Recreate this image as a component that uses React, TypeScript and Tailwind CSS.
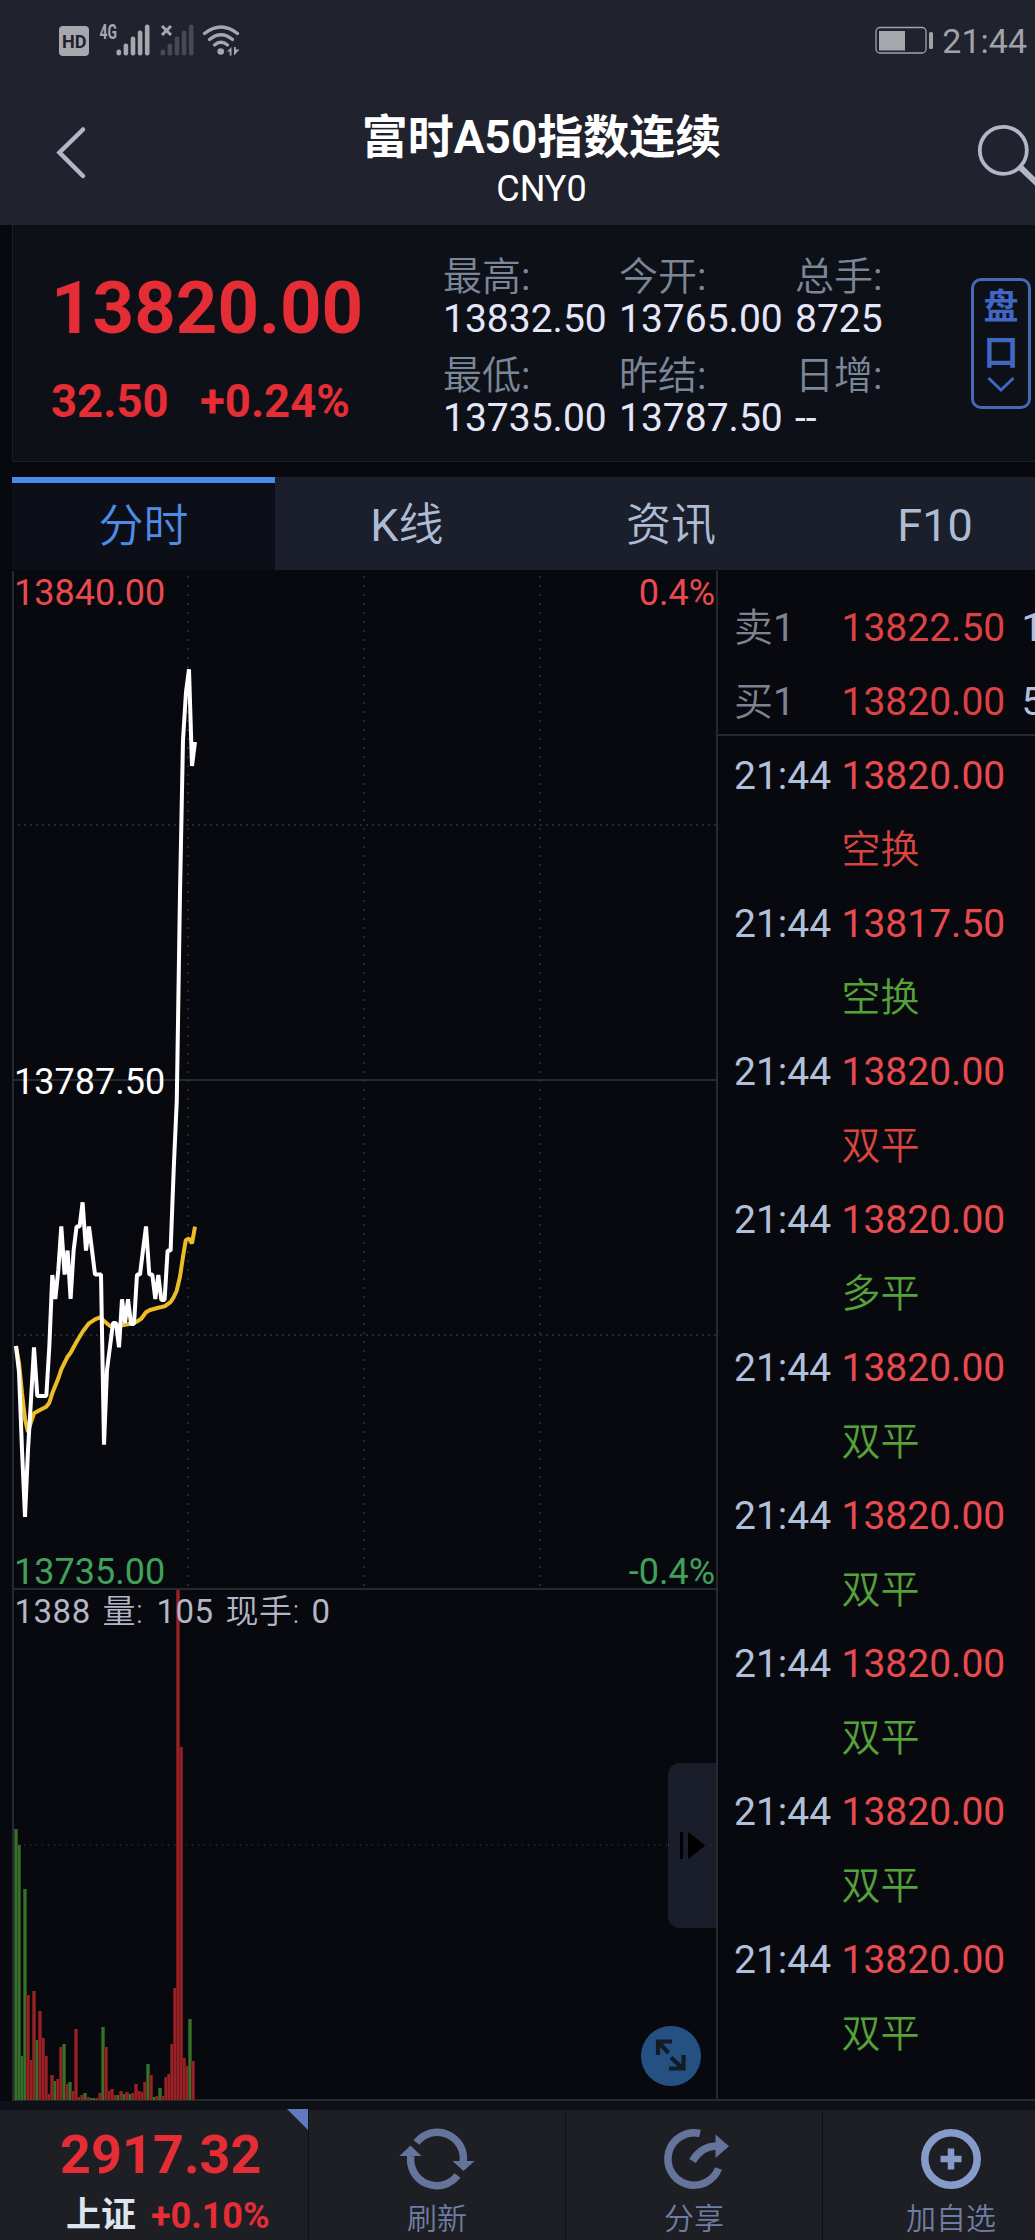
import React from "react";

const FONT = "font-['Roboto','Noto_Sans_CJK_SC',sans-serif]";

type Point = [number, number];

// Price and average lines, in chart-area pixels measured from the page origin.
const PRICE: Point[] = [
  [16, 1346], [19, 1372], [22, 1450], [25, 1517], [28, 1450], [31, 1400], [34, 1347.3],
  [37.3, 1396], [46.3, 1396], [49.3, 1347], [52.3, 1275], [55.3, 1299], [58.3, 1270], [61.3, 1226.5],
  [64.6, 1274.5], [67.6, 1250.6], [70.6, 1299], [73.6, 1250.6], [76.6, 1226.5], [79.6, 1226.5],
  [82.6, 1202.3], [86, 1250.6], [89, 1226.5], [92, 1250], [95, 1274.5], [101, 1274.5], [104, 1444.6],
  [107, 1370], [110, 1346.5], [113, 1323], [116, 1323], [119, 1347.3], [122, 1299.3], [125, 1323],
  [128, 1299.3], [131, 1324], [134, 1324], [137, 1274.5], [140, 1274.5], [143, 1250], [146, 1226.5],
  [149.3, 1274.5], [152.3, 1274.5], [155.3, 1299], [158.3, 1275], [161.3, 1300], [164.6, 1300],
  [167.6, 1250.6], [170.6, 1250.6], [173.8, 1167], [176.8, 1100], [180, 893], [183, 740], [186, 692],
  [189, 669.3], [192, 766], [195, 742],
];

const AVERAGE: Point[] = [
  [16, 1346], [19, 1363], [22, 1393], [25, 1419], [28, 1432], [31, 1422], [34, 1413.3], [40, 1410],
  [46.3, 1406.7], [49.3, 1402.7], [52.3, 1393.3], [58.3, 1378.3], [61.3, 1369.3], [67.6, 1356.7],
  [70.6, 1352.7], [76.6, 1341.7], [82.6, 1331.7], [89, 1323.3], [95, 1319.3], [100, 1317.3],
  [104, 1321], [110, 1326], [115, 1326], [122, 1325.3], [128, 1324.3], [134, 1322.7], [137, 1321.7],
  [141.6, 1318.3], [146, 1312.3], [150, 1310], [158.3, 1307.7], [164.6, 1306.3], [170.6, 1302],
  [173.6, 1297.3], [176.6, 1291], [180, 1276.7], [183, 1256.7], [185.8, 1240], [189, 1238.7],
  [192, 1243.3], [195, 1226.7],
];

// Height of each minute's volume bar and whether the price rose (r) or fell (g).
const VOLUME: [number, "r" | "g"][] = [
  [271, "g"], [255, "g"], [44, "g"], [211, "g"], [105, "r"], [40, "r"], [109, "r"], [60, "g"],
  [89, "r"], [62, "r"], [44, "r"], [6, "r"], [25, "r"], [19, "g"], [21, "r"], [53, "r"], [56, "g"],
  [16, "r"], [18, "g"], [9, "r"], [71, "r"], [3, "r"], [5, "r"], [7, "g"], [3, "r"], [2, "g"],
  [2, "g"], [2, "r"], [7, "r"], [73, "g"], [53, "r"], [9, "r"], [11, "r"], [5, "r"], [5, "g"],
  [9, "r"], [6, "g"], [8, "r"], [6, "g"], [7, "r"], [16, "r"], [9, "r"], [8, "r"], [18, "r"],
  [36, "g"], [25, "r"], [3, "g"], [4, "r"], [12, "g"], [4, "r"], [23, "r"], [26, "r"], [56, "r"],
  [112, "r"], [510, "r"], [353, "r"], [42, "r"], [34, "r"], [81, "g"], [39, "r"],
];

const TRADES = [
  ["13820.00", "空换", true],
  ["13817.50", "空换", false],
  ["13820.00", "双平", true],
  ["13820.00", "多平", false],
  ["13820.00", "双平", false],
  ["13820.00", "双平", false],
  ["13820.00", "双平", false],
  ["13820.00", "双平", false],
  ["13820.00", "双平", false],
] as const;

const ORDERS = [
  ["卖", "13822.50", "1"],
  ["买", "13820.00", "5"],
];

const toPoints = (p: Point[]) => p.map(([x, y]) => `${x},${y}`).join(" ");

function StatusBar() {
  const bars = [0, 1, 2, 3, 4];
  const heights = [6, 12, 19, 25, 31];
  return (
    <div className="flex h-[80px] items-start pt-[22px] pl-[57px]">
      <svg width="190" height="38" viewBox="57 22 190 38" fill="#a7a8ad">
        <rect x="59" y="26" width="30" height="30" rx="4" />
        <text x="74.200" y="47.700" textAnchor="middle" fontSize="19" fontWeight="700" textLength="24.5" lengthAdjust="spacingAndGlyphs" fill="#20222d" fontFamily="Roboto">HD</text>
        <text x="99.5" y="39" fontSize="19.5" fontWeight="700" textLength="17.5" lengthAdjust="spacingAndGlyphs" fontFamily="Roboto">4G</text>
        {bars.map((i) => (
          <rect key={i} x={116.5 + i * 7.1} y={55.5 - heights[i]} width="4.6" height={heights[i]} rx="2.2" />
        ))}
        {bars.map((i) => (
          <rect key={i} x={160.5 + i * 7.1} y={55.5 - heights[i]} width="4.6" height={heights[i]} rx="2.2" fill="#474954" />
        ))}
        <path d="M162 26l9 9M171 26l-9 9" stroke="#a7a8ad" strokeWidth="3" />
        <g fill="none" stroke="#a7a8ad" strokeWidth="3.300" strokeLinecap="round">
          <path d="M204.500 33.500Q221 20.500 237.500 33.500" />
          <path d="M209.500 39.500Q221 30 232.500 39.500" />
          <path d="M214.500 45Q221 39.500 227.500 45" />
        </g>
        <circle cx="220.700" cy="51.500" r="3.300" />
        <path d="M227 51.500l4.500-4.500v8.500h-1.800v-4zM234 47v8.500l5.500-6h-3.700V47z" />
      </svg>
      <svg className="mt-[4px] ml-auto" width="60" height="30" viewBox="874 26 60 30">
        <rect x="875" y="27.500" width="50" height="25.500" rx="4" fill="none" stroke="#a2a3a9" strokeWidth="1.300" />
        <rect x="878" y="31" width="26" height="19.500" fill="#a7a8ad" />
        <rect x="928" y="32" width="4" height="17" rx="1.500" fill="#a2a3a9" />
      </svg>
      <span className="mr-[8px] ml-[7px] text-[34px] leading-[38px] text-[#a2a3a9]">21:44</span>
    </div>
  );
}

function Header() {
  return (
    <header className="h-[225px] shrink-0 bg-[#20222d]">
      <StatusBar />
      <div className="flex h-[145px] justify-between pt-[28px] pl-[52px]">
        <svg className="mt-[14px]" width="40" height="60" viewBox="52 122 40 60" fill="none" stroke="#b4b6c8" strokeWidth="4.500" strokeLinecap="round">
          <path d="M83 129.500L59.500 152.500L83 176" />
        </svg>
        <div className="ml-[16px] flex flex-col items-center">
          <h1 className="text-[46px] leading-[58px] font-bold text-white">富时A50指数连续</h1>
          <div className="text-[36px] leading-[46px] text-white">CNY0</div>
        </div>
        <svg className="mt-[10px]" width="60" height="70" viewBox="975 118 60 70" fill="none" stroke="#b4b6c8">
          <circle cx="1003.300" cy="150.300" r="23.500" strokeWidth="3.800" />
          <path d="M1020 167L1042 188" strokeWidth="6" />
        </svg>
      </div>
    </header>
  );
}

function Quote() {
  const cells = [
    ["最高:", "13832.50"], ["今开:", "13765.00"], ["总手:", "8725"],
    ["最低:", "13735.00"], ["昨结:", "13787.50"], ["日增:", "--"],
  ];
  return (
    <section className="ml-[12px] flex h-[237px] shrink-0 border-b border-l border-[#1b1d21] bg-[#0d1017]">
      <div className="w-[430px] pt-[48px] pl-[38px] text-[#e42d34]">
        <div className="text-[72.500px] leading-[72px] font-bold">13820.00</div>
        <div className="mt-[27px] flex text-[45.500px] leading-[60px] font-bold">
          <span className="w-[149px]">32.50</span>
          <span>+0.24%</span>
        </div>
      </div>
      <div className="grid h-[190px] grid-cols-[176px_176px_176px] gap-y-[15px] pt-[31px] text-[39px] leading-[42px]">
        {cells.map(([label, value]) => (
          <div key={label}>
            <div className="font-[350] text-[#7b8799]">
              {label.slice(0, 2)}
              <span className="font-normal">:</span>
            </div>
            <div className="text-[#e6e6fb]">{value}</div>
          </div>
        ))}
      </div>
      <div className="mt-[53px] flex h-[131px] w-[60px] shrink-0 flex-col items-center rounded-[10px] border-3 border-[#4668b5] pt-[4px] text-[35px] leading-[45.500px] font-bold text-[#3f67c3]">
        <span>盘</span>
        <span>口</span>
        <svg width="28" height="17" viewBox="0 0 28 17" fill="none" stroke="#3f67c3" strokeWidth="3">
          <path d="M1.500 2L14 14L26.500 2" />
        </svg>
      </div>
    </section>
  );
}

function Tabs() {
  return (
    <nav className="mt-[15px] ml-[12px] flex h-[93px] shrink-0 text-[45px] font-[350] text-[#adbcd4]">
      <div className="w-[263px] shrink-0 border-t-6 border-[#4a89ee] bg-[#0c0f17] text-center leading-[88px] text-[#4f8ce8]">分时</div>
      <div className="w-[264px] shrink-0 bg-[#1a1f2b] text-center leading-[98px]">
        <span className="font-normal">K</span>线
      </div>
      <div className="w-[264px] shrink-0 bg-[#1a1f2b] text-center leading-[98px]">资讯</div>
      <div className="w-[264px] shrink-0 bg-[#1a1f2b] text-center leading-[98px] font-normal">F10</div>
    </nav>
  );
}

function Chart() {
  return (
    <div className="relative w-[718px] shrink-0 text-[36px] leading-[36px]">
      <svg className="block" width="718" height="1531" viewBox="0 570 718 1531">
        <g fill="none" stroke="#242a30" strokeWidth="2">
          <path d="M13 571V2101M717 571V2101M13 1589H716M14 1080H716M13 2100H716" />
          <g strokeDasharray="2 7">
            <path d="M188 576V1588M364 576V1588M540 576V1588" />
          </g>
          <g strokeDasharray="2 4">
            <path d="M18 825H716M18 1335H716" />
          </g>
          <path d="M18 1845H716" strokeDasharray="1 5" />
        </g>
        {VOLUME.map(([h, c], i) => (
          <g key={i}>
            <rect x={14 + i * 3} y={2100 - h} width="4" height={h} fill={c === "r" ? "#6e1a1d" : "#23511f"} />
            <rect x={15 + i * 3} y={2100 - h} width="2" height={h} fill={c === "r" ? "#972124" : "#387028"} />
          </g>
        ))}
        <polyline points={toPoints(AVERAGE)} fill="none" stroke="#ecbd27" strokeWidth="4" strokeLinejoin="bevel" />
        <polyline points={toPoints(PRICE)} fill="none" stroke="#fff" strokeWidth="4" strokeLinejoin="bevel" />
      </svg>
      <span className="absolute top-[5px] left-[14px] text-[#e94a4f]">13840.00</span>
      <span className="absolute top-[5px] right-[3px] text-[#e94a4f]">0.4%</span>
      <span className="absolute top-[494px] left-[14px] text-white">13787.50</span>
      <span className="absolute top-[984px] left-[14px] text-[#41a05a]">13735.00</span>
      <span className="absolute top-[984px] right-[3px] text-[#41a05a]">-0.4%</span>
      <span className="absolute top-[1024px] left-[14.500px] flex text-[33px] tracking-[0.5px] text-[#b4b6c6]">
        <span className="w-[88px]">1388</span>
        <span className="w-[54px] font-[350]">量:</span>
        <span className="w-[69px]">105</span>
        <span className="w-[86px] font-[350]">现手:</span>
        <span>0</span>
      </span>
      <div className="absolute top-[1193px] right-[2px] h-[165px] w-[48px] rounded-l-[12px] bg-[#1a1d2a]">
        <svg width="48" height="165" viewBox="0 0 48 165">
          <path d="M0 82H48" stroke="#2a2e38" strokeWidth="2" strokeDasharray="1 5" />
          <path d="M12 69h3v27h-3zM20 69v27l17.500-13.500z" fill="#000" />
        </svg>
      </div>
      <svg className="absolute top-[1456px] right-[17px]" width="60" height="60" viewBox="0 0 60 60">
        <circle cx="30" cy="30" r="30" fill="#255182" />
        <path d="M17 29V15.500H31M17.500 16L27.500 27M30 31.500L42.500 43M28 42.500H42.500V29" fill="none" stroke="#121a26" strokeWidth="4.200" />
      </svg>
    </div>
  );
}

function Ticks() {
  return (
    <div className="flex w-[317px] flex-col overflow-hidden border-b-2 border-[#242a30] pt-[21px] text-[39px] leading-[74px]">
      <div className="h-[145px] shrink-0 border-b-2 border-[#242a30]">
        {ORDERS.map(([side, price, qty]) => (
          <div key={side} className="flex h-[74px] pl-[16px]">
            <span className="w-[107.500px] shrink-0 text-[#7d8490]">
              <span className="font-[350]">{side}</span>1
            </span>
            <span className="w-[180px] shrink-0 text-[#dd4144]">{price}</span>
            <span className="text-[#b3c0da]">{qty}</span>
          </div>
        ))}
      </div>
      <div className="mt-[3px]">
        {TRADES.map(([price, kind, up], i) => (
          <div key={i} className="grid h-[148px] grid-cols-[107.500px_1fr] pl-[16px]">
            <span className="text-[#b3c0da]">21:44</span>
            <span className="text-[#e94a4f]">{price}</span>
            <span className={up ? "col-start-2 font-[350] text-[#d8453f]" : "col-start-2 font-[350] text-[#55a13a]"}>{kind}</span>
          </div>
        ))}
      </div>
    </div>
  );
}

function BottomBar() {
  const item = "flex w-[257px] shrink-0 flex-col items-center border-l border-[#101115] pt-[16px] text-[30px] leading-[36px] font-[350] text-[#6f7da3]";
  return (
    <footer className="relative flex h-[130px] shrink-0 bg-[#1e1f24]">
      <div className="w-[308px] shrink-0 pt-[17px] text-[#e42d34]">
        <div className="pl-[60px] text-[54px] leading-[56px] font-bold">2917.32</div>
        <div className="mt-[12px] flex pl-[66px] text-[36px] leading-[42px] font-bold">
          <span className="w-[85px] text-[35px] text-[#dde6ee]">上证</span>
          <span>+0.10%</span>
        </div>
      </div>
      <svg className="absolute top-[-1px] left-[287px]" width="21" height="21" viewBox="0 0 21 21">
        <path d="M0 0H21V21z" fill="#6079c0" />
      </svg>
      <div className={item}>
        <svg width="80" height="66" viewBox="-40 -33 80 66" fill="none" stroke="#65749a" strokeWidth="7.500">
          <path d="M-20.500 -16.500A26.200 26.200 0 0 1 26.200 3" />
          <path d="M20.500 16.500A26.200 26.200 0 0 1 -26.200 -3" />
          <path d="M15.500 2H37.500L26.500 12zM-15.500 -3H-37.500L-26.500 -13.500z" fill="#65749a" stroke="none" />
        </svg>
        <span className="mt-[9px]">刷新</span>
      </div>
      <div className={item}>
        <svg width="80" height="66" viewBox="-40 -33 80 66" fill="none" stroke="#65749a" strokeWidth="7.500">
          <path d="M6 -25.500A26.200 26.200 0 1 0 24.500 9.500" />
          <path d="M-1.500 2Q7 -12.500 22 -13" />
          <path d="M21.500 -24.500V-1L35 -12.700z" fill="#65749a" stroke="none" />
        </svg>
        <span className="mt-[9px]">分享</span>
      </div>
      <div className={item}>
        <svg width="80" height="66" viewBox="-40 -33 80 66" fill="none" stroke="#879bcb" strokeWidth="7.500">
          <circle cx="0" cy="0" r="26.200" />
          <path d="M-10.500 0H10.500M0 -10.500V10.500" strokeWidth="6.500" />
        </svg>
        <span className="mt-[9px]">加自选</span>
      </div>
    </footer>
  );
}

export default function App() {
  return (
    <div className={`${FONT} flex h-[2240px] w-[1035px] flex-col overflow-hidden bg-[#08090e]`}>
      <Header />
      <Quote />
      <Tabs />
      <main className="flex h-[1531px] shrink-0">
        <Chart />
        <Ticks />
      </main>
      <div className="h-[9px] shrink-0 bg-[#0e1118]" />
      <BottomBar />
    </div>
  );
}
